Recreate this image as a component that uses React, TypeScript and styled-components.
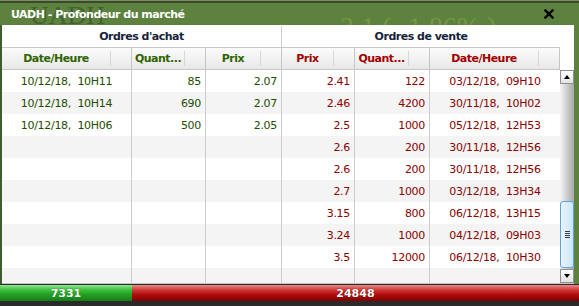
import * as React from 'react';
import styled, { createGlobalStyle } from 'styled-components';

type Order = {
  date: string;
  qty: number;
  price: string;
};

const buys: Order[] = [
  { date: '10/12/18,  10H11', qty: 85, price: '2.07' },
  { date: '10/12/18,  10H14', qty: 690, price: '2.07' },
  { date: '10/12/18,  10H06', qty: 500, price: '2.05' },
];

const sells: Order[] = [
  { date: '03/12/18,  09H10', qty: 122, price: '2.41' },
  { date: '30/11/18,  10H02', qty: 4200, price: '2.46' },
  { date: '05/12/18,  12H53', qty: 1000, price: '2.5' },
  { date: '30/11/18,  12H56', qty: 200, price: '2.6' },
  { date: '30/11/18,  12H56', qty: 200, price: '2.6' },
  { date: '03/12/18,  13H34', qty: 1000, price: '2.7' },
  { date: '06/12/18,  13H15', qty: 800, price: '3.15' },
  { date: '04/12/18,  09H03', qty: 1000, price: '3.24' },
  { date: '06/12/18,  10H30', qty: 12000, price: '3.5' },
];

const ROWS = 10;
const buyTotal = 7331;
const sellTotal = 24848;

const GlobalStyle = createGlobalStyle`
  body {
    margin: 0;
    background: #2b2b2b;
    font-family: "DejaVu Sans", Verdana, sans-serif;
  }
`;

const CloseIcon = () => (
  <svg width="10" height="10" viewBox="0 0 10 10">
    <path d="M1.5 1.5 L8.5 8.5 M8.5 1.5 L1.5 8.5" stroke="#000" strokeWidth="2.4" strokeLinecap="square" />
  </svg>
);

const pad = (list: Order[]) =>
  Array.from({ length: ROWS }, (_, i) => list[i] || null);

const App: React.FC = () => {
  const buyWidth = (buyTotal / (buyTotal + sellTotal)) * 579;
  return (
    <>
      <GlobalStyle />
      <Window>
        <TopStrip />
        <TitleBar>
          <Ghost $left={30} $top={-2} $color="#3f5a2c" $size={26}>UADH</Ghost>
          <Ghost $left={340} $top={8} $color="#7f9a44" $size={28}>3.1 ( -1.86% )</Ghost>
          <Title>UADH - Profondeur du marché</Title>
          <Close>
            <CloseIcon />
          </Close>
        </TitleBar>
        <Frame>
          <Panel>
            <GroupRow>
              <GroupCell $width={280} $divider>Ordres d'achat</GroupCell>
              <GroupCell $width={278}>Ordres de vente</GroupCell>
            </GroupRow>
            <HeaderRow>
              <HeadCell $width={130} $side="buy"><span>Date/Heure</span><Sep /></HeadCell>
              <HeadCell $width={74} $side="buy"><span>Quant...</span><Sep /></HeadCell>
              <HeadCell $width={76} $side="buy"><span>Prix</span><Sep /></HeadCell>
              <HeadCell $width={73} $side="sell"><span>Prix</span><Sep /></HeadCell>
              <HeadCell $width={75} $side="sell"><span>Quant...</span><Sep /></HeadCell>
              <HeadCell $width={130} $side="sell" $last><span>Date/Heure</span><Sep /></HeadCell>
            </HeaderRow>
            <Body>
              <Side>
                {pad(buys).map((o, i) => (
                  <Row key={i}>
                    <Cell $width={130} $align="center" $side="buy">{o?.date}</Cell>
                    <Cell $width={74} $align="right" $side="buy">{o?.qty}</Cell>
                    <Cell $width={76} $align="right" $side="buy">{o?.price}</Cell>
                  </Row>
                ))}
              </Side>
              <Side>
                {pad(sells).map((o, i) => (
                  <Row key={i}>
                    <Cell $width={73} $align="right" $side="sell">{o?.price}</Cell>
                    <Cell $width={75} $align="right" $side="sell">{o?.qty}</Cell>
                    <Cell $width={130} $align="center" $side="sell" $last>{o?.date}</Cell>
                  </Row>
                ))}
              </Side>
              <Scrollbar>
                <ScrollButton>
                  <Arrow $up />
                </ScrollButton>
                <Track>
                  <Thumb>
                    <Grip />
                  </Thumb>
                </Track>
                <ScrollButton>
                  <Arrow />
                </ScrollButton>
              </Scrollbar>
            </Body>
          </Panel>
        </Frame>
        <Totals>
          <BuyBar style={{ width: buyWidth }}>{buyTotal}</BuyBar>
          <SellBar>{sellTotal}</SellBar>
        </Totals>
        <Bottom />
      </Window>
    </>
  );
};

export default App;

const Window = styled.div`
  width: 579px;
  height: 306px;
  overflow: hidden;
  background: #2b2b2b;
  display: flex;
  flex-direction: column;
`;

const TopStrip = styled.div`
  height: 3px;
  background: linear-gradient(#7d8c68 0 1px, #3c4a2c 1px);
`;

const TitleBar = styled.div`
  position: relative;
  height: 22px;
  display: flex;
  align-items: center;
  background: #5d8240;
  overflow: hidden;
`;

const Ghost = styled.span<{ $left: number; $top: number; $color: string; $size: number }>`
  position: absolute;
  left: ${p => p.$left}px;
  top: ${p => p.$top}px;
  font-family: "Liberation Serif", serif;
  font-size: ${p => p.$size}px;
  color: ${p => p.$color};
  white-space: pre;
  opacity: 0.8;
`;

const Title = styled.div`
  position: relative;
  flex: 1;
  padding-left: 11px;
  color: #fff;
  font-weight: bold;
  font-size: 11px;
  letter-spacing: -0.5px;
`;

const Close = styled.div`
  position: relative;
  width: 10px;
  height: 10px;
  margin-right: 25px;
  display: flex;
`;

const Frame = styled.div`
  display: flex;
  height: 259px;
  background: #5d8240;
  border-left: 2px solid #3f5c2a;
  padding-right: 5px;
`;

const Panel = styled.div`
  flex: 1;
  background: #fff;
  display: flex;
  flex-direction: column;
  border-bottom: 1px solid #c4c4c4;
`;

const GroupRow = styled.div`
  display: flex;
  height: 22px;
  padding-top: 1px;
`;

const GroupCell = styled.div<{ $width: number; $divider?: boolean }>`
  width: ${p => p.$width}px;
  box-sizing: border-box;
  display: flex;
  align-items: center;
  justify-content: center;
  border-bottom: 1px solid #c8c8c8;
  border-right: ${p => (p.$divider ? '1px solid #cfcfcf' : 'none')};
  font-weight: bold;
  font-size: 11px;
  letter-spacing: -0.5px;
  color: #16233a;
`;

const HeaderRow = styled.div`
  display: flex;
  height: 22px;
`;

const HeadCell = styled.div<{ $width: number; $side: 'buy' | 'sell'; $last?: boolean }>`
  width: ${p => p.$width}px;
  box-sizing: border-box;
  display: flex;
  align-items: center;
  padding-right: 20px;
  background: linear-gradient(#fbfbfb, #e8e8e8);
  border-bottom: 1px solid #c6c6c6;
  border-right: 1px solid #c6c6c6;
  font-weight: bold;
  font-size: 11px;
  letter-spacing: -0.5px;
  color: ${p => (p.$side === 'buy' ? '#2f6300' : '#a30000')};

  span {
    flex: 1;
    text-align: center;
  }
`;

const Sep = styled.i`
  width: 1px;
  height: 15px;
  background: #d6d6d6;
`;

const Body = styled.div`
  flex: 1;
  display: flex;
  overflow: hidden;
`;

const Side = styled.div`
  display: flex;
  flex-direction: column;
`;

const Row = styled.div`
  display: flex;
  height: 22px;
  flex-shrink: 0;
  background: #fff;

  &:nth-child(even) {
    background: #f4f4f4;
  }
`;

const Cell = styled.div<{ $width: number; $align: 'center' | 'right'; $side: 'buy' | 'sell'; $last?: boolean }>`
  width: ${p => p.$width}px;
  box-sizing: border-box;
  display: flex;
  align-items: center;
  justify-content: ${p => (p.$align === 'center' ? 'center' : 'flex-end')};
  padding-right: ${p => (p.$align === 'right' ? '4px' : '0')};
  border-right: ${p => (p.$last ? 'none' : '1px solid #cbcbcb')};
  font-size: 11px;
  letter-spacing: -0.3px;
  white-space: pre;
  color: ${p => (p.$side === 'buy' ? '#1c4d00' : '#8c0000')};
`;

const Scrollbar = styled.div`
  width: 14px;
  margin-left: auto;
  display: flex;
  flex-direction: column;
  background: linear-gradient(to right, #f4f4f4, #c6c6c6 60%, #a9a9a9);
`;

const ScrollButton = styled.div`
  height: 14px;
  box-sizing: border-box;
  border: 1px solid #8f8f8f;
  background: linear-gradient(#ffffff, #e2e2e2);
  display: flex;
  align-items: center;
  justify-content: center;
`;

const Arrow = styled.i<{ $up?: boolean }>`
  width: 0;
  height: 0;
  border-left: 3px solid transparent;
  border-right: 3px solid transparent;
  ${p => (p.$up ? 'border-bottom: 4px solid #000;' : 'border-top: 4px solid #000;')}
`;

const Track = styled.div`
  flex: 1;
  display: flex;
  flex-direction: column;
  justify-content: flex-end;
  padding-bottom: 1px;
`;

const Thumb = styled.div`
  height: 67px;
  box-sizing: border-box;
  border: 1px solid #5ea3e6;
  border-radius: 3px;
  background: linear-gradient(to right, #eaf5ff, #c9e5fc);
  display: flex;
  align-items: center;
  justify-content: center;
`;

const Grip = styled.i`
  width: 5px;
  height: 7px;
  background: repeating-linear-gradient(#3c3c3c 0 1px, transparent 1px 2px);
`;

const Totals = styled.div`
  display: flex;
  height: 16px;
  margin-top: 1px;
  font-size: 11px;
  font-weight: bold;
  color: #fff;
`;

const BuyBar = styled.div`
  display: flex;
  align-items: center;
  justify-content: center;
  background: linear-gradient(#8ee88e, #3fbe3f 30%, #22a022 60%, #167d16);
  text-shadow: 0 0 1px #0a4a0a;
`;

const SellBar = styled.div`
  flex: 1;
  display: flex;
  align-items: center;
  justify-content: center;
  background: linear-gradient(#ec8a8a, #d03a3a 30%, #b00e0e 60%, #7e0000);
  text-shadow: 0 0 1px #4a0000;
`;

const Bottom = styled.div`
  flex: 1;
  background: #2a2a2a;
`;
